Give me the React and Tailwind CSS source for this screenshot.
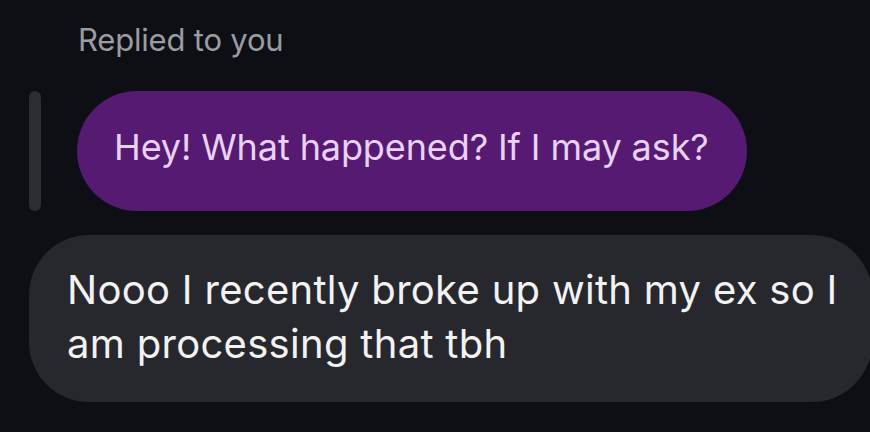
export default function App() {
    return (
        <div className="w-[870px] h-[432px] overflow-hidden bg-[#0d0f14] pt-[21px]" style={{ fontFamily: 'Inter, "Noto Sans", sans-serif' }}>
            <div className="pl-[78px] text-[31px] leading-[38px] tracking-[-0.2px] text-[#9a9ca2]">Replied to you</div>
            <div className="flex items-stretch mt-[32px] pl-[29px]">
                <div className="w-[12px] rounded-full bg-[#2b2d32]"></div>
                <div className="ml-[36px] h-[120px] flex items-center rounded-full bg-[#561a72] pl-[37px] pr-[38px] pb-[8px]">
                    <span className="text-[36px] tracking-[-0.1px] text-[#e8d2f2]">Hey! What happened? If I may ask?</span>
                </div>
            </div>
            <div className="mt-[24px] ml-[29px] w-[843px] h-[167px] rounded-[60px] bg-[#26282d] pl-[38px] pr-[20px] pt-[28px]">
                <p className="max-w-[780px] text-[40px] leading-[54px] tracking-[0.3px] text-[#f2f2f3]">
                    Nooo I recently broke up with my ex so I am processing that tbh
                </p>
            </div>
        </div>
    );
}
